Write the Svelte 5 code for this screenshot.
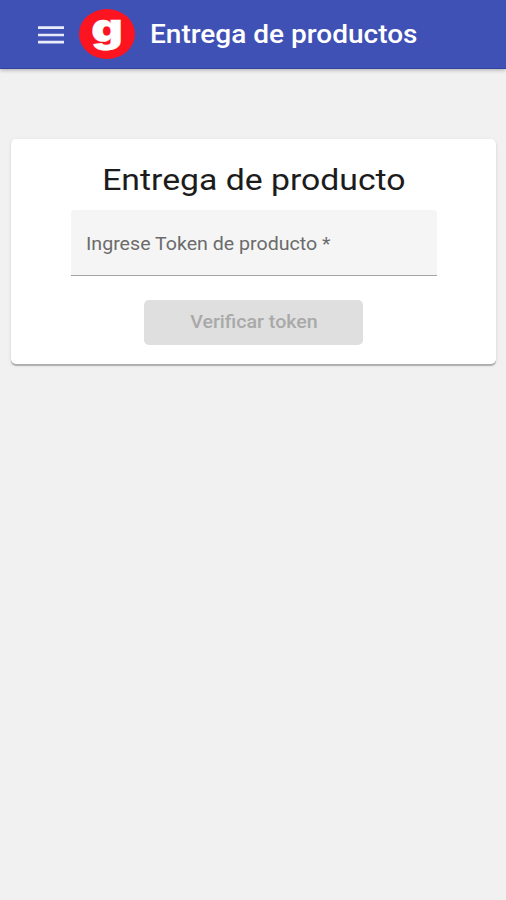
<script lang="ts">
  let title = 'Entrega de productos';
  let token = $state('');
</script>

<header class="toolbar">
  <button class="menu" aria-label="Menu">
    <svg width="26" height="18" viewBox="0 0 26 18">
      <path d="M0 1.7h26M0 9h26M0 16.2h26" stroke="#e8ecfb" stroke-width="2.7" />
    </svg>
  </button>
  <svg class="logo" width="56" height="50" viewBox="0 0 56 50">
    <ellipse cx="28" cy="25" rx="28" ry="25" fill="#fc1420" />
    <text transform="translate(28 33) scale(1.22 1)" text-anchor="middle">g</text>
  </svg>
  <h1><span>{title}</span></h1>
</header>

<main>
  <section class="card">
    <h2><span>Entrega de producto</span></h2>
    <label class="field">
      {#if !token}
        <span>Ingrese Token de producto *</span>
      {/if}
      <input type="text" bind:value={token} />
    </label>
    <button class="verify" disabled={!token}><span>Verificar token</span></button>
  </section>
</main>

<style>
  :global(body) {
    min-height: 100vh;
    margin: 0;
    background: #f1f1f1;
    font-family: Roboto, sans-serif;
  }

  h1,
  h2 {
    margin: 0;
    white-space: nowrap;
  }

  h1 span,
  h2 span,
  .field span,
  .verify span {
    display: inline-block;
    white-space: nowrap;
    transform: scaleX(1.12);
  }

  .toolbar {
    display: flex;
    align-items: center;
    box-sizing: border-box;
    height: 69px;
    padding: 1px 0 0 38px;
    border-bottom: 1px solid #31429f;
    background: #3f51b5;
    box-shadow: 0 1px 4px rgba(0, 0, 0, 0.3);
    color: #fff;
  }

  .menu {
    display: flex;
    padding: 0;
    border: 0;
    background: none;
  }

  .logo {
    flex: none;
    margin: -2px 0 0 15px;
    overflow: visible;
  }

  .logo text {
    fill: #fff;
    stroke: #fff;
    stroke-width: 0.4;
    font: 900 40px / 1 Inter, sans-serif;
  }

  h1 {
    margin-left: 15px;
    font-size: 25px;
    font-weight: 500;
    line-height: 32px;
  }

  h1 span {
    transform-origin: left;
  }

  main {
    padding: 70px 10px 0 11px;
  }

  .card {
    display: flex;
    flex-direction: column;
    align-items: center;
    box-sizing: border-box;
    height: 225px;
    padding-top: 21px;
    border-radius: 5px;
    background: #fff;
    box-shadow:
      0 1.5px 1px rgba(0, 0, 0, 0.25),
      0 1px 4px rgba(0, 0, 0, 0.08);
  }

  h2 {
    color: #1c1c1c;
    font-size: 30px;
    font-weight: 400;
    line-height: 40px;
  }

  h2 span {
    transform: scaleX(1.125);
  }

  .field {
    display: grid;
    align-items: center;
    box-sizing: border-box;
    width: 366px;
    height: 66px;
    margin-top: 10px;
    padding: 0 15px;
    border-bottom: 1.5px solid #a4a4a4;
    border-radius: 4px 4px 0 0;
    background: #f5f5f5;
  }

  .field span,
  .field input {
    grid-area: 1 / 1;
  }

  .field span {
    justify-self: start;
    padding-top: 2px;
    color: #6b6b6b;
    font-size: 17.5px;
    transform-origin: left;
  }

  .field input {
    border: 0;
    outline: 0;
    background: none;
    font: inherit;
  }

  .verify {
    width: 219px;
    height: 45px;
    margin-top: 24px;
    padding-bottom: 3px;
    border: 0;
    border-radius: 5px;
    background: #dfdfdf;
    color: #a9a9a9;
    font: 500 17.5px Roboto, sans-serif;
  }
</style>
